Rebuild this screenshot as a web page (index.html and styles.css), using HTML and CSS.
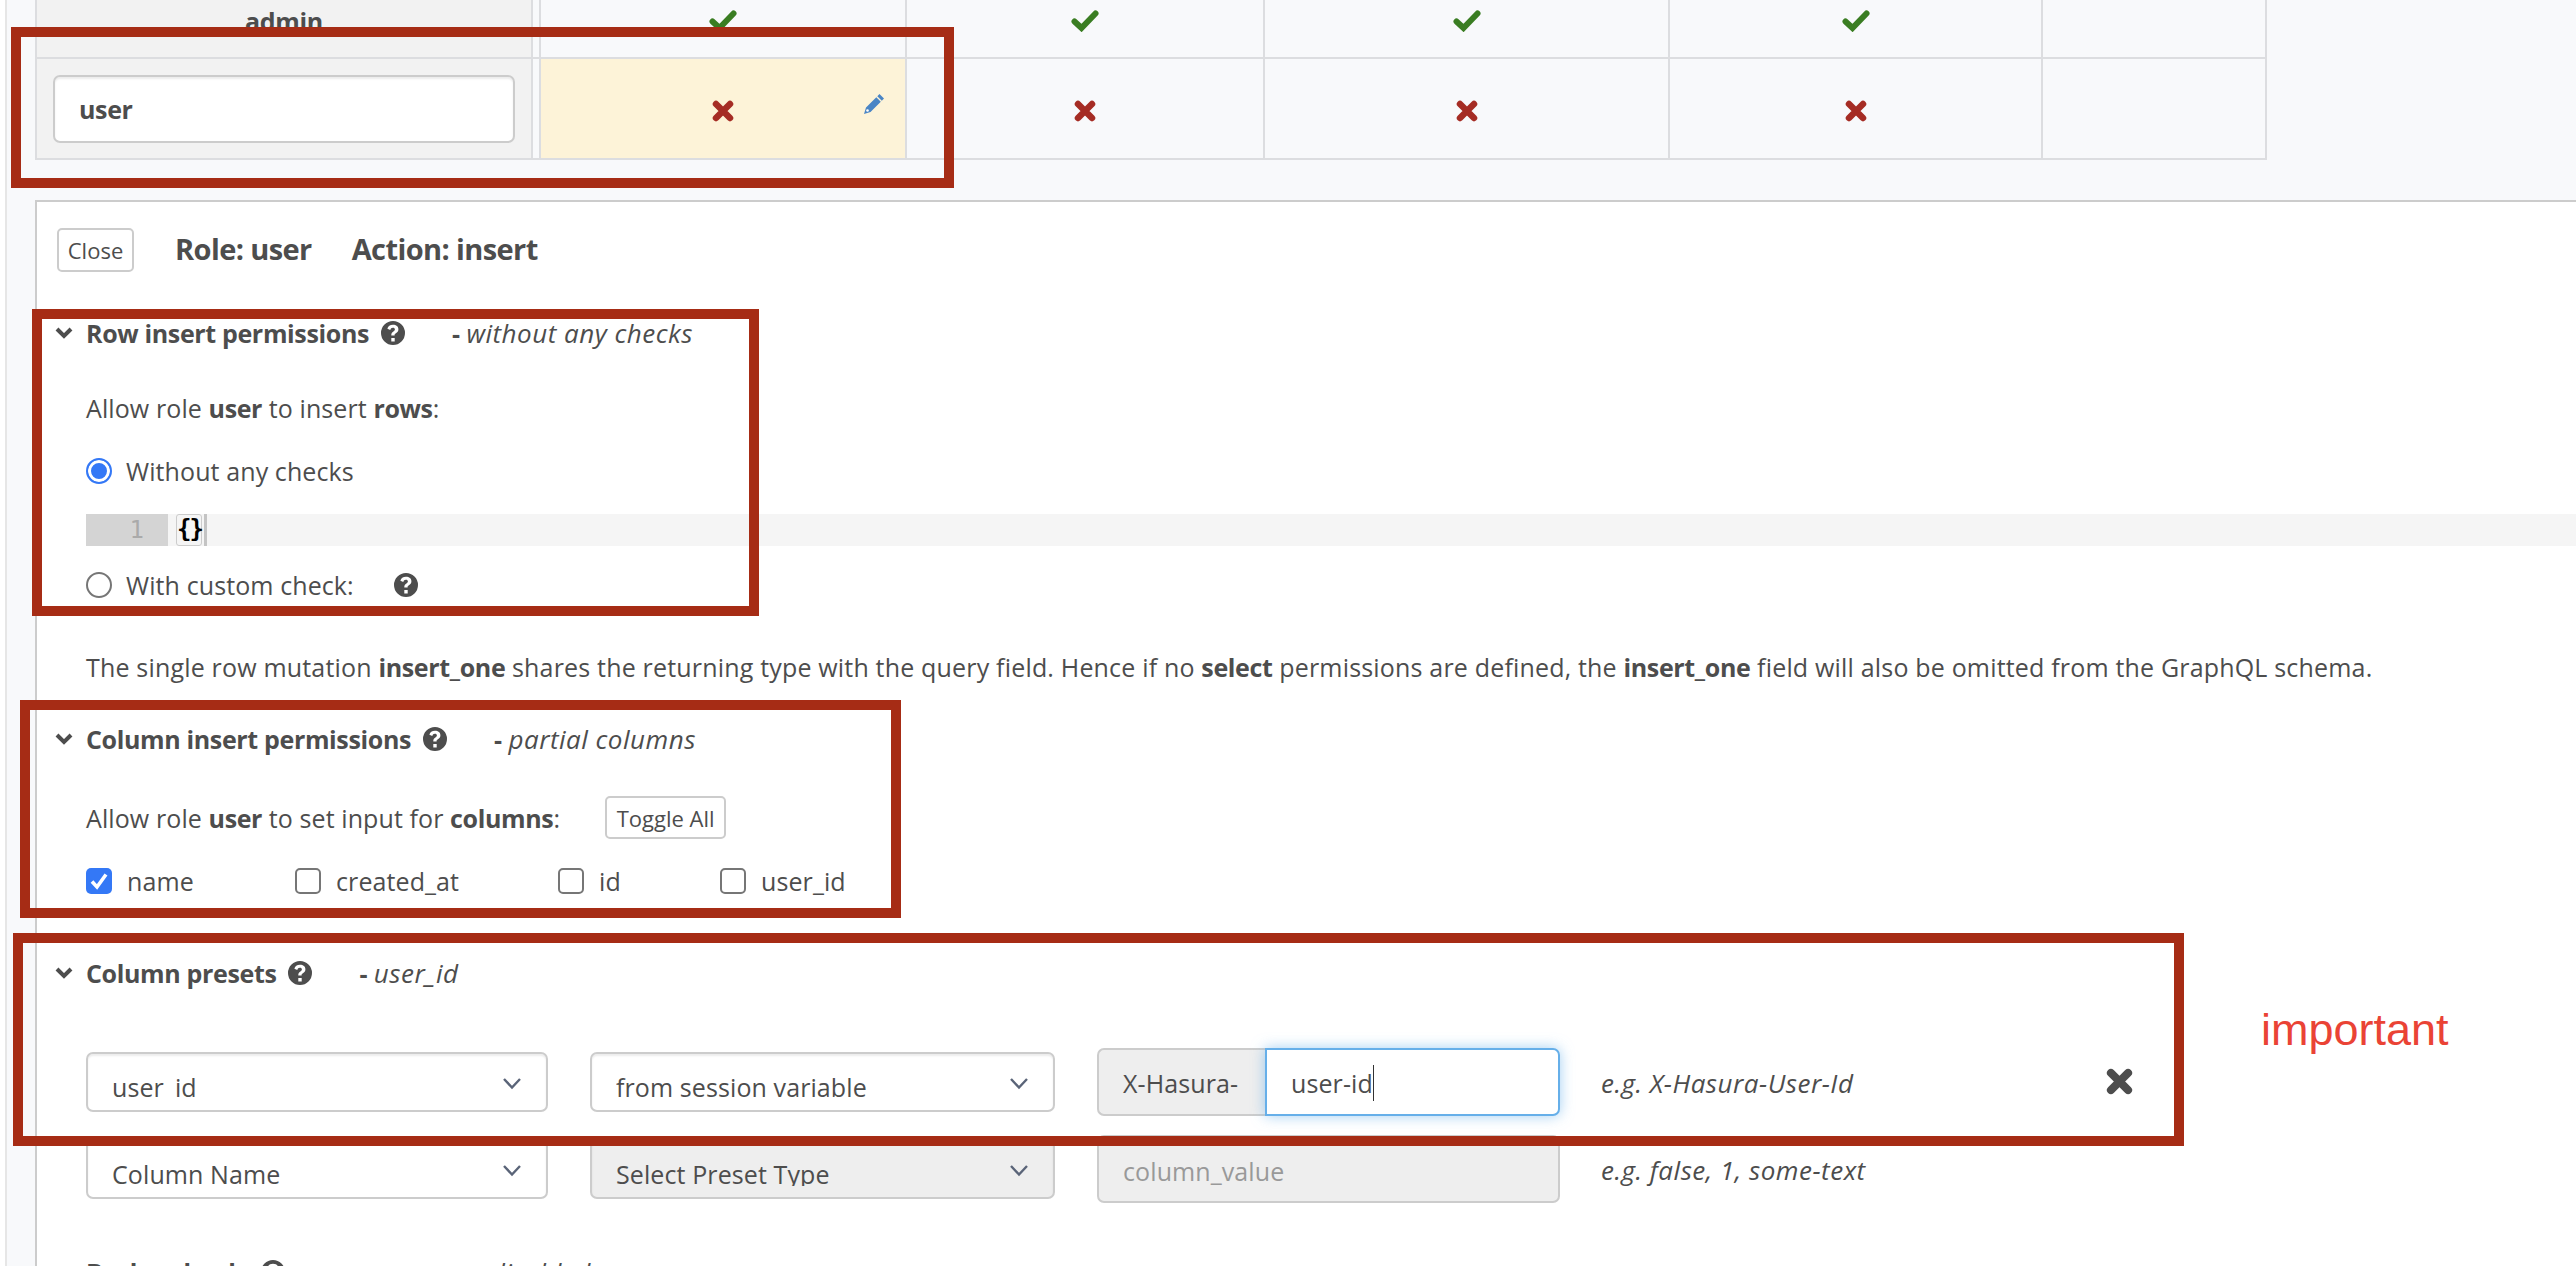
FILE: index.html
```html
<!DOCTYPE html>
<html lang="en">
<head>
<meta charset="utf-8">
<title>Permissions</title>
<link rel="stylesheet" href="styles.css">
</head>
<body>
<svg class="defs" width="0" height="0">
  <defs>
    <symbol id="check" viewBox="0 0 28 22"><path d="M3.500 11.500 10.500 18 24.500 3.500" fill="none" stroke="currentColor" stroke-width="6" stroke-linecap="round"/></symbol>
    <symbol id="cross" viewBox="0 0 22 22"><path d="M4 4 18 18M18 4 4 18" fill="none" stroke="currentColor" stroke-width="6.500" stroke-linecap="round"/></symbol>
    <symbol id="help" viewBox="0 0 24 24"><path fill-rule="evenodd" d="M12 0a12 12 0 1 1 0 24 12 12 0 0 1 0-24ZM10.300 17v3.400h3.400V17ZM12 3.800c-3 0-5 1.500-5.600 4l2.900 1.200c.4-1.400 1.200-2.200 2.600-2.200 1.200 0 2 .6 2 1.600 0 .9-.6 1.400-1.500 2-1.500 1-2.100 1.900-2.100 3.600v.6h3.300v-.4c0-.9.400-1.300 1.300-1.900 1.400-.9 2.500-1.900 2.500-4 0-2.800-2.200-4.500-5.400-4.500Z"/></symbol>
    <symbol id="chev" viewBox="0 0 20 14"><path d="M3 3 10 10 17 3" fill="none" stroke="currentColor" stroke-width="4"/></symbol>
    <symbol id="caret" viewBox="0 0 20 13"><path d="M2 2 10 10.500 18 2" fill="none" stroke="currentColor" stroke-width="2.400"/></symbol>
  </defs>
</svg>

<div class="perm-table">
  <div class="row row-admin">
    <div class="cell role">admin</div>
    <div class="cell c1"><svg class="ic-check"><use href="#check"/></svg></div>
    <div class="cell"><svg class="ic-check"><use href="#check"/></svg></div>
    <div class="cell"><svg class="ic-check"><use href="#check"/></svg></div>
    <div class="cell"><svg class="ic-check"><use href="#check"/></svg></div>
    <div class="cell"></div>
  </div>
  <div class="row row-user">
    <div class="cell role"><div class="role-input">user</div></div>
    <div class="cell c1 active">
      <svg class="ic-cross"><use href="#cross"/></svg>
      <svg class="ic-pencil" viewBox="0 0 22 22"><path d="M16.500 1 21 5.500 18.800 7.700 14.300 3.200ZM13.300 4.200 17.800 8.700 7.500 19 1 21 3 14.500Z"/><circle class="pencil-tip" cx="4.500" cy="17.500" r="1.300"/></svg>
    </div>
    <div class="cell"><svg class="ic-cross"><use href="#cross"/></svg></div>
    <div class="cell"><svg class="ic-cross"><use href="#cross"/></svg></div>
    <div class="cell"><svg class="ic-cross"><use href="#cross"/></svg></div>
    <div class="cell"></div>
  </div>
</div>

<section class="panel">
  <div class="panel-head">
    <button class="btn close">Close</button>
    <span class="panel-title">Role: user</span>
    <span class="panel-title">Action: insert</span>
  </div>

  <div class="sec-head sec-row">
    <svg class="chev"><use href="#chev"/></svg>
    <b>Row insert permissions</b>
    <svg class="help"><use href="#help"/></svg>
    <span class="status"><b>-</b> <i>without any checks</i></span>
  </div>
  <p class="line allow-rows">Allow role <b>user</b> to insert <b>rows</b>:</p>
  <label class="radio-row r1"><span class="radio on"></span>Without any checks</label>
  <div class="code"><span class="gutter">1</span><span class="brace">{}</span><span class="cursor"></span></div>
  <label class="radio-row r2"><span class="radio"></span>With custom check:<svg class="help help-custom"><use href="#help"/></svg></label>
  <p class="line note">The single row mutation <b>insert_one</b> shares the returning type with the query field. Hence if no <b>select</b> permissions are defined, the <b>insert_one</b> field will also be omitted from the GraphQL schema.</p>

  <div class="sec-head sec-col">
    <svg class="chev"><use href="#chev"/></svg>
    <b>Column insert permissions</b>
    <svg class="help"><use href="#help"/></svg>
    <span class="status"><b>-</b> <i>partial columns</i></span>
  </div>
  <div class="allow-cols">
    <p class="line">Allow role <b>user</b> to set input for <b>columns</b>:</p>
    <button class="btn toggle">Toggle All</button>
  </div>
  <div class="checks">
    <label class="chk c-name"><span class="box on"><svg viewBox="0 0 26 26"><path d="M6 13.500 11 19 20 6.500" fill="none" stroke="#fff" stroke-width="3.600"/></svg></span>name</label>
    <label class="chk c-created"><span class="box"></span>created_at</label>
    <label class="chk c-id"><span class="box"></span>id</label>
    <label class="chk"><span class="box"></span>user_id</label>
  </div>

  <div class="sec-head sec-preset">
    <svg class="chev"><use href="#chev"/></svg>
    <b>Column presets</b>
    <svg class="help"><use href="#help"/></svg>
    <span class="status"><b>-</b> <i>user_id</i></span>
  </div>
  <div class="preset p1">
    <div class="select s-name"><span class="sel-text">user_id</span><svg class="caret"><use href="#caret"/></svg></div>
    <div class="select s-type"><span class="sel-text">from session variable</span><svg class="caret"><use href="#caret"/></svg></div>
    <div class="group">
      <span class="addon">X-Hasura-</span>
      <span class="focus-input">user-id<span class="text-cursor"></span></span>
    </div>
    <i class="eg">e.g. X-Hasura-User-Id</i>
    <svg class="ic-remove"><use href="#cross"/></svg>
  </div>
  <div class="preset p2">
    <div class="select s-name"><span class="sel-text">Column Name</span><svg class="caret"><use href="#caret"/></svg></div>
    <div class="select s-type disabled"><span class="sel-text">Select Preset Type</span><svg class="caret"><use href="#caret"/></svg></div>
    <div class="disabled-input">column_value</div>
    <i class="eg">e.g. false, 1, some-text</i>
  </div>

  <div class="sec-head sec-backend">
    <b>Backend only</b>
    <svg class="help"><use href="#help"/></svg>
    <span class="status s-back"><b>-</b> <i>disabled</i></span>
  </div>
</section>

<div class="mark m1"></div>
<div class="mark m2"></div>
<div class="mark m3"></div>
<div class="mark m4"></div>
<div class="important">important</div>
</body>
</html>
```
FILE: styles.css
```css
* { box-sizing: border-box; }
html, body { height: 100%; }
body {
  margin: 0;
  height: 1266px;
  overflow: hidden;
  position: relative;
  background: #f8f9fb;
  color: #4d4d4d;
  font-family: "Open Sans", "Noto Sans", sans-serif;
  font-size: 25px;
  letter-spacing: 0.1px;
}
body::before {
  content: "";
  position: absolute;
  left: 0;
  top: 0;
  bottom: 0;
  width: 5px;
  background: #fff;
  border-right: 2px solid #e6e6e6;
}
.defs { position: absolute; }
b { font-weight: 700; letter-spacing: -0.35px; }
p { margin: 0; }

.perm-table { margin-left: 35px; width: 2232px; }
.row { display: grid; grid-template-columns: 498px 6px 368px 358px 405px 373px 224px; }
.row-admin { height: 60px; margin-top: -1px; border-bottom: 2px solid #dcdde0; }
.row-user { height: 101px; border-bottom: 2px solid #dcdde0; }
.cell { display: flex; align-items: center; justify-content: center; border-right: 2px solid #dcdde0; position: relative; }
.role { grid-column: 1; background: #f2f2f2; border-left: 2px solid #dcdde0; font-weight: 700; letter-spacing: -0.35px; }
.c1 { grid-column: 3; border-left: 2px solid #dcdde0; }
.row-admin .cell { padding-bottom: 14px; }
.active { background: #fdf3d8; }
.role-input {
  width: 462px; height: 68px; background: #fff; border: 2px solid #ccc; border-radius: 7px;
  font-weight: 700; display: flex; align-items: center; padding: 0 24px; box-shadow: inset 0 2px 2px rgba(0,0,0,.08);
}
.ic-check { width: 28px; height: 22px; color: #3a7d22; }
.ic-cross { width: 22px; height: 22px; color: #a52c24; position: relative; top: 2px; }
.ic-pencil { position: absolute; right: 20px; top: 34px; width: 22px; height: 22px; fill: #4a85c5; }
.pencil-tip { fill: #fff; }

.panel {
  margin: 40px 0 0 35px;
  background: #fff;
  border-top: 2px solid #ccc;
  border-left: 2px solid #ccc;
  height: 1100px;
  padding-left: 21px;
}
.panel-head { display: flex; align-items: center; height: 44px; margin-top: 26px; }
.btn { background: #fff; border: 2px solid #ccc; border-radius: 5px; font: inherit; color: #4d4d4d; font-size: 22px; letter-spacing: 0; padding: 0; }
.close { width: 77px; height: 44px; margin-left: -1px; margin-right: 41px; }
.panel-title { font-weight: 700; font-size: 29px; margin-right: 40px; letter-spacing: -0.6px; margin-top: -4px; }

.sec-head { display: flex; align-items: center; height: 36px; position: relative; }
.sec-head > b { margin-left: 12px; }
.chev { width: 20px; height: 14px; color: #4d4d4d; flex: none; margin-left: -4px; }
.help { width: 24px; height: 24px; fill: #4d4d4d; margin-left: 12px; flex: none; }
.status { margin-left: 47px; }
.status i { font-style: italic; font-size: 26px; letter-spacing: 0.5px; }
.s-back { margin-left: 190px; }

.sec-row { margin-top: 43px; }
.line { line-height: 36px; }
.allow-rows { margin: 39px 0 0 28px; }
.radio-row { display: flex; align-items: center; height: 36px; margin-left: 28px; }
.r1 { margin-top: 27px; }
.r2 { margin-top: 21px; }
.radio { width: 26px; height: 26px; border-radius: 50%; border: 2px solid #767676; background: #fff; margin-right: 14px; flex: none; }
.radio.on { border-color: #3478f6; box-shadow: inset 0 0 0 3px #fff; background: #3478f6; }
.help-custom { margin-left: 40px; }
.code { display: flex; height: 32px; margin: 25px 0 0 28px; background: #f5f5f5; align-items: center; font-family: "DejaVu Sans Mono", monospace; font-size: 24px; letter-spacing: 0; }
.gutter { width: 82px; height: 100%; background: #d4d4d4; color: #aaa; text-align: right; padding-right: 24px; line-height: 32px; }
.brace { color: #000; margin-left: 8px; width: 26px; height: 100%; border: 1px solid #ccc; border-radius: 3px; line-height: 28px; text-align: center; font-weight: 700; letter-spacing: -2px; }
.cursor { width: 3px; height: 100%; background: #c4c4c4; margin-left: 2px; }
.note { margin: 46px 0 0 28px; letter-spacing: 0.18px; }

.sec-col { margin-top: 36px; }
.allow-cols { display: flex; align-items: center; margin: 39px 0 0 28px; height: 43px; }
.toggle { width: 121px; height: 43px; margin-left: 45px; }
.checks { display: flex; margin: 22px 0 0 28px; align-items: center; height: 40px; }
.chk { display: flex; align-items: center; }
.box { width: 26px; height: 26px; border: 2px solid #767676; border-radius: 5px; background: #fff; margin-right: 15px; flex: none; }
.box.on { background: #3478f6; border: 0; }
.box svg { display: block; width: 26px; height: 26px; }
.c-name { width: 209px; }
.c-created { width: 263px; }
.c-id { width: 162px; }

.sec-preset { margin-top: 54px; }
.preset { display: flex; position: relative; margin-left: 28px; }
.select {
  height: 60px; border: 2px solid #ccc; border-radius: 7px; background: #fff; position: relative;
  padding: 16px 24px 0; flex: none; box-shadow: inset 0 2px 2px rgba(0,0,0,.08);
}
.sel-text { display: block; height: 29px; line-height: 34px; overflow: hidden; white-space: nowrap; }
.s-name { width: 462px; margin-right: 42px; }
.s-type { width: 465px; margin-right: 42px; }
.select.disabled { background: #eee; }
.caret { position: absolute; right: 24px; top: 23px; width: 20px; height: 13px; color: #5a6478; }
.p1 { margin-top: 61px; height: 72px; }
.group { display: flex; height: 68px; width: 463px; margin-top: -4px; flex: none; }
.addon { width: 168px; background: #eee; border: 2px solid #ccc; border-right: 0; border-radius: 7px 0 0 7px; display: flex; align-items: center; padding-left: 24px; padding-top: 1px; }
.focus-input { flex: 1; background: #fff; border: 2px solid #66afe9; border-radius: 0 7px 7px 0; display: flex; align-items: center; padding-left: 24px; padding-top: 1px; box-shadow: 0 0 14px rgba(102,175,233,.6); position: relative; }
.text-cursor { width: 1px; height: 36px; background: #333; display: inline-block; }
.eg { position: absolute; left: 1515px; top: 13px; white-space: nowrap; font-size: 26px; letter-spacing: 0.5px; }
.ic-remove { position: absolute; left: 2020px; top: 16px; width: 27px; height: 27px; color: #4d4d4d; }
.p2 { margin-top: 15px; height: 60px; }
.disabled-input { width: 463px; height: 68px; margin-top: -4px; background: #eee; border: 2px solid #ccc; border-radius: 7px; color: #999; display: flex; align-items: center; padding: 3px 24px 0; flex: none; }
.p2 .eg { top: 13px; }
.sec-backend { margin: 55px 0 0 28px; }
.sec-backend > b { margin-left: 0; }

.mark { position: absolute; border: 10px solid #a62c15; }
.m1 { left: 11px; top: 27px; width: 943px; height: 161px; }
.m2 { left: 32px; top: 309px; width: 727px; height: 307px; }
.m3 { left: 20px; top: 700px; width: 881px; height: 218px; }
.m4 { left: 13px; top: 933px; width: 2171px; height: 213px; }
.important { position: absolute; left: 2261px; top: 1000px; font-family: "Liberation Sans", sans-serif; font-size: 45px; letter-spacing: 0; color: #ea4335; line-height: 60px; }
```
